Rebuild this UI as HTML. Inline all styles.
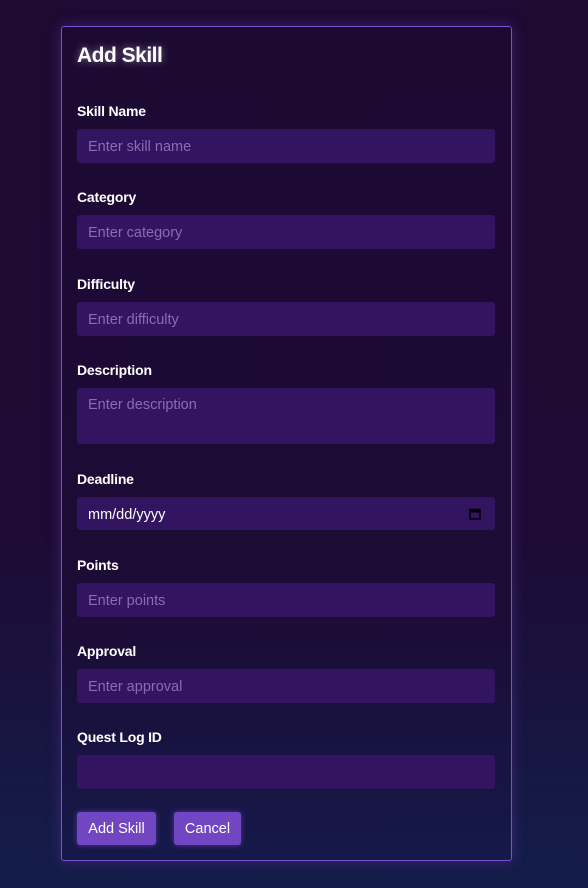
<!DOCTYPE html>
<html><head><style>
*{box-sizing:border-box;margin:0;padding:0}
html,body{width:588px;height:888px;overflow:hidden}
body{background:linear-gradient(180deg,#1d0b33 0%,#1d0b35 60%,#141d4a 100%);font-family:"Liberation Sans",sans-serif;position:relative}
.card{position:absolute;left:61px;top:26px;width:451px;height:835px;border:1px solid #7a4fd0;border-radius:3px;background:linear-gradient(180deg,#1c0a33 0%,#1c0b35 70%,#15194a 100%);box-shadow:0 0 14px rgba(120,70,210,.35)}
h1{position:absolute;left:15px;top:17px;color:#fff;font-size:21px;font-weight:bold;text-shadow:0 0 8px rgba(255,255,255,.45);letter-spacing:-0.5px}
.l{position:absolute;left:15px;color:#fff;font-size:14px;font-weight:bold;letter-spacing:-0.2px}
.i{position:absolute;left:15px;width:418px;height:34px;background:#331460;border-radius:3px;color:#8a6cb0;font-size:14.5px;padding:10px 11px;line-height:16px}
.b{position:absolute;top:785px;height:33px;background:#7245c2;border-radius:3px;color:#fff;font-size:14.5px;line-height:34px;text-align:center;box-shadow:0 0 6px rgba(140,90,230,.5)}
</style></head><body>
<div class="card">
<h1>Add Skill</h1>
<div class="l" style="top:76px">Skill Name</div><div class="i" style="top:102px">Enter skill name</div>
<div class="l" style="top:162px">Category</div><div class="i" style="top:188px">Enter category</div>
<div class="l" style="top:249px">Difficulty</div><div class="i" style="top:275px">Enter difficulty</div>
<div class="l" style="top:335px">Description</div><div class="i" style="top:361px;height:56px;padding-top:9px">Enter description</div>
<div class="l" style="top:444px">Deadline</div><div class="i" style="top:470px;height:33px;color:#fff">mm/dd/yyyy<svg style="position:absolute;right:14px;top:11px" width="12" height="12" viewBox="0 0 12 12"><rect x="1" y="1.5" width="10" height="9.5" fill="none" stroke="#000" stroke-width="1.5"/><rect x="1" y="1.5" width="10" height="3" fill="#000"/></svg></div>
<div class="l" style="top:530px">Points</div><div class="i" style="top:556px">Enter points</div>
<div class="l" style="top:616px">Approval</div><div class="i" style="top:642px">Enter approval</div>
<div class="l" style="top:702px">Quest Log ID</div><div class="i" style="top:728px"></div>
<div class="b" style="left:15px;width:79px">Add Skill</div>
<div class="b" style="left:112px;width:67px">Cancel</div>
</div>
</body></html>
